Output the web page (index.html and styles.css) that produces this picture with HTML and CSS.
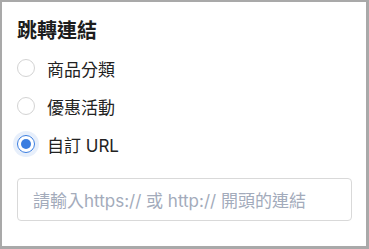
FILE: index.html
```html
<!DOCTYPE html>
<html lang="zh-Hant">
<head>
<meta charset="utf-8">
<link rel="stylesheet" href="styles.css">
</head>
<body>
<div class="panel">
  <h2 class="title">跳轉連結</h2>
  <div class="options">
    <label class="option"><span class="radio"></span><span class="label">商品分類</span></label>
    <label class="option"><span class="radio"></span><span class="label">優惠活動</span></label>
    <label class="option"><span class="radio checked"></span><span class="label">自訂 URL</span></label>
  </div>
  <div class="input">請輸入https:// 或 http:// 開頭的連結</div>
</div>
</body>
</html>
```

FILE: styles.css
```css
html, body {
  margin: 0;
  padding: 0;
  background: #a9a9a9;
}
body {
  font-family: Inter, "Noto Sans CJK TC", sans-serif;
  color: #222;
  padding: 2px 3px 3px 2px;
  height: 249px;
  box-sizing: border-box;
}
.panel {
  background: #fff;
  height: 100%;
  box-sizing: border-box;
  padding: 15px 15px 0 15px;
}
.title {
  margin: 0 0 4px 0;
  font-size: 20px;
  line-height: 28px;
  font-weight: 700;
  color: #1d1d1d;
}
.options {
  display: flex;
  flex-direction: column;
}
.option {
  display: flex;
  align-items: center;
  height: 38px;
  gap: 12px;
  font-size: 17px;
}
.radio {
  width: 18px;
  height: 18px;
  border-radius: 50%;
  border: 1px solid #d3d3d3;
  box-sizing: border-box;
  flex: none;
  display: flex;
  align-items: center;
  justify-content: center;
}
.radio.checked {
  border: 1.5px solid #3a7de0;
  box-shadow: 0 0 0 4px rgba(58, 125, 224, 0.12);
}
.radio.checked::after {
  content: "";
  width: 10px;
  height: 10px;
  border-radius: 50%;
  background: #3a7de0;
}
.input {
  margin-top: 15px;
  height: 43px;
  box-sizing: border-box;
  border: 1px solid #d9d9d9;
  border-radius: 4px;
  padding: 0 15px;
  display: flex;
  align-items: center;
  font-size: 17px;
  color: #a3abbb;
  width: 335px;
}
```
